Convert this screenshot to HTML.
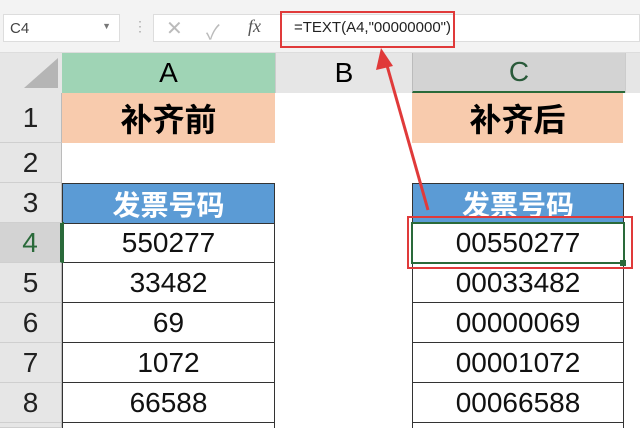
<!DOCTYPE html>
<html><head><meta charset="utf-8"><style>
html,body{margin:0;width:640px;height:428px;overflow:hidden}
body{background:#fff;font-family:"Liberation Sans","Noto Sans CJK SC",sans-serif;position:relative}
.a{position:absolute;box-sizing:border-box}
.c{display:flex;align-items:center;justify-content:center}
.num{font-size:28px;color:#111}
.rh{left:0;width:62px;background:#e6e6e6;border-bottom:1px solid #cfcfcf;border-right:1px solid #bbb;font-size:28px;color:#222}
.cell{border:1px solid #333;border-top:none}
</style></head><body>
<div class="a" style="left:0;top:0;width:640px;height:53px;background:#f3f3f3;border-bottom:1px solid #ddd"></div>
<div class="a" style="left:3px;top:14px;width:117px;height:28px;background:#fff;border:1px solid #ddd;font-size:15px;color:#444;padding:5px 6px">C4<span style="position:absolute;right:8px;top:6px;font-size:9px;color:#777">▼</span></div>
<div class="a" style="left:133px;top:18px;color:#aaa;font-size:14px">⋮</div>
<div class="a" style="left:153px;top:14px;width:487px;height:28px;background:#fff;border:1px solid #ddd"></div>
<div class="a" style="left:166px;top:16px;color:#bbb;font-size:20px">✕</div>
<div class="a" style="left:206px;top:16px;color:#bbb;font-size:20px">✓</div>
<div class="a" style="left:248px;top:16px;color:#555;font-size:18px;font-style:italic;font-family:'Liberation Serif',serif">fx</div>
<div class="a" style="left:294px;top:19px;font-size:15px;color:#222">=TEXT(A4,"00000000")</div>
<div class="a" style="left:280px;top:11px;width:175px;height:37px;border:2px solid #e03a3a"></div>
<!-- column headers -->
<div class="a" style="left:0;top:53px;width:62px;height:40px;background:#e6e6e6"></div>
<svg class="a" style="left:20px;top:56px" width="40" height="34"><polygon points="38,2 38,32 4,32" fill="#b5b5b5"/></svg>
<div class="a c" style="left:62px;top:53px;width:213px;height:40px;background:#9fd4b5;font-size:28px">A</div>
<div class="a c" style="left:275px;top:53px;width:137px;height:40px;background:#e6e6e6;font-size:28px;border-left:1px solid #ccc">B</div>
<div class="a c" style="left:412px;top:53px;width:213px;height:40px;background:#d3d3d3;font-size:28px;color:#2a5a3a;border-bottom:2px solid #2a6a3a;border-left:1px solid #bbb">C</div>
<div class="a" style="left:625px;top:53px;width:15px;height:40px;background:#e6e6e6;border-left:1px solid #ccc"></div>
<!-- row headers -->
<div class="a c rh" style="top:93px;height:50px">1</div>
<div class="a c rh" style="top:143px;height:40px">2</div>
<div class="a c rh" style="top:183px;height:40px">3</div>
<div class="a c rh" style="top:223px;height:40px;background:#d3d3d3;color:#2a6a3a;border-right:2px solid #2a6a3a">4</div>
<div class="a c rh" style="top:263px;height:40px">5</div>
<div class="a c rh" style="top:303px;height:40px">6</div>
<div class="a c rh" style="top:343px;height:40px">7</div>
<div class="a c rh" style="top:383px;height:40px">8</div>
<div class="a c rh" style="top:423px;height:5px"></div>
<!-- row 1 -->
<div class="a c" style="left:62px;top:93px;width:213px;height:50px;background:#f8cbad;font-size:32px;font-weight:bold">补齐前</div>
<div class="a c" style="left:412px;top:93px;width:211px;height:50px;background:#f8cbad;font-size:32px;font-weight:bold">补齐后</div>
<!-- row 3 -->
<div class="a c" style="left:62px;top:183px;width:213px;height:40px;background:#5b9bd5;color:#fff;font-size:28px;font-weight:bold;border:1px solid #333;border-bottom:none">发票号码</div>
<div class="a c" style="left:412px;top:183px;width:212px;height:40px;background:#5b9bd5;color:#fff;font-size:28px;font-weight:bold;border:1px solid #333;border-bottom:none">发票号码</div>
<!-- A data -->
<div class="a c cell num" style="left:62px;top:223px;width:213px;height:40px;border-top:1px solid #333">550277</div>
<div class="a c cell num" style="left:62px;top:263px;width:213px;height:40px">33482</div>
<div class="a c cell num" style="left:62px;top:303px;width:213px;height:40px">69</div>
<div class="a c cell num" style="left:62px;top:343px;width:213px;height:40px">1072</div>
<div class="a c cell num" style="left:62px;top:383px;width:213px;height:40px">66588</div>
<div class="a cell" style="left:62px;top:423px;width:213px;height:5px;border-bottom:none"></div>
<!-- C data -->
<div class="a c cell num" style="left:412px;top:223px;width:212px;height:40px;border-top:1px solid #333">00550277</div>
<div class="a c cell num" style="left:412px;top:263px;width:212px;height:40px">00033482</div>
<div class="a c cell num" style="left:412px;top:303px;width:212px;height:40px">00000069</div>
<div class="a c cell num" style="left:412px;top:343px;width:212px;height:40px">00001072</div>
<div class="a c cell num" style="left:412px;top:383px;width:212px;height:40px">00066588</div>
<div class="a cell" style="left:412px;top:423px;width:212px;height:5px;border-bottom:none"></div>
<!-- selection -->
<div class="a" style="left:62px;top:222px;width:2px;height:41px;background:#2a6a3a"></div>
<div class="a" style="left:411px;top:222px;width:214px;height:42px;border:2px solid #2a6a3a"></div>
<div class="a" style="left:620px;top:260px;width:6px;height:6px;background:#2a6a3a"></div>
<div class="a" style="left:407px;top:216px;width:226px;height:53px;border:2px solid #e03a3a"></div>
<!-- arrow -->
<svg class="a" style="left:0;top:0" width="640" height="428"><line x1="428" y1="210" x2="386" y2="62" stroke="#e03a3a" stroke-width="3"/><polygon points="381,48 376,70 393,66" fill="#e03a3a"/></svg>
</body></html>
